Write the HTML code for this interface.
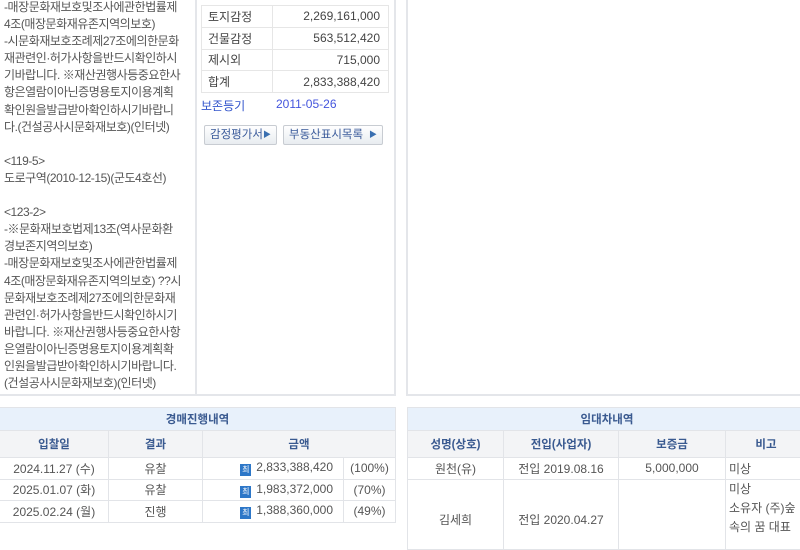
<!DOCTYPE html>
<html><head><meta charset="utf-8"><style>
*{margin:0;padding:0;box-sizing:border-box}
body{width:800px;height:522px;overflow:hidden;background:#fff;font-family:"Liberation Sans","Noto Sans CJK KR",sans-serif;font-size:12px;color:#555;position:relative}
.abs{position:absolute}
.txt{left:4px;top:-1px;width:191px;line-height:17.1px;letter-spacing:-0.45px;white-space:nowrap;height:394px;overflow:hidden}
table{border-collapse:collapse}
.inner{left:201px;top:5px;width:188px}
.inner td{border:1px solid #e6e6e6;height:21.8px;padding:0 6px;color:#444}
.inner td.r{text-align:right;padding-right:8px}
.btn{top:125px;height:20px;border:1px solid #c8ccd2;border-radius:2px;background:linear-gradient(#fff,#e8ecf0);color:#3a5a9a;font-size:11.5px;line-height:18px;padding-left:5px}
.btn span{position:absolute;right:5px;color:#3a6fb0;font-size:8px}
.bt{border-collapse:collapse;position:absolute;top:407px}
.bt td,.bt th{border:1px solid #e2e4e8;text-align:center;height:21.5px;color:#555;font-weight:normal}
.bt .t{background:#e8f1fb;color:#3a5a90;height:23px;font-weight:bold;font-size:11.5px}
.bt .h th{background:#f3f4f6;color:#3a5a90;height:27px;font-weight:bold;font-size:11.5px}
.ic{display:inline-block;width:11px;height:12px;background:#2d77c8;color:#fff;font-size:8px;line-height:12px;text-align:center;margin-right:5px;vertical-align:-1px}
.p{color:#4455dd}
</style></head><body>
<div class="abs txt">-매장문화재보호및조사에관한법률제<br>4조(매장문화재유존지역의보호)<br>-시문화재보호조례제27조에의한문화<br>재관련인·허가사항을반드시확인하시<br>기바랍니다. ※재산권행사등중요한사<br>항은열람이아닌증명용토지이용계획<br>확인원을발급받아확인하시기바랍니<br>다.(건설공사시문화재보호)(인터넷)<br><br>&lt;119-5&gt;<br>도로구역(2010-12-15)(군도4호선)<br><br>&lt;123-2&gt;<br>-※문화재보호법제13조(역사문화환<br>경보존지역의보호)<br>-매장문화재보호및조사에관한법률제<br>4조(매장문화재유존지역의보호) ??시<br>문화재보호조례제27조에의한문화재<br>관련인·허가사항을반드시확인하시기<br>바랍니다. ※재산권행사등중요한사항<br>은열람이아닌증명용토지이용계획확<br>인원을발급받아확인하시기바랍니다.<br>(건설공사시문화재보호)(인터넷)</div>
<div class="abs" style="left:195px;top:0;width:2px;height:395px;background:#e4e6ea"></div>
<div class="abs" style="left:394px;top:0;width:2px;height:396px;background:#e4e6ea"></div>
<div class="abs" style="left:0;top:394px;width:396px;height:2px;background:#e4e6ea"></div>
<div class="abs" style="left:406px;top:0;width:2px;height:396px;background:#e4e6ea"></div>
<div class="abs" style="left:406px;top:394px;width:394px;height:2px;background:#e4e6ea"></div>
<table class="abs inner">
<tr><td style="width:71px">토지감정</td><td class="r">2,269,161,000</td></tr>
<tr><td>건물감정</td><td class="r">563,512,420</td></tr>
<tr><td>제시외</td><td class="r">715,000</td></tr>
<tr><td>합계</td><td class="r">2,833,388,420</td></tr>
</table>
<div class="abs" style="left:201px;top:97px;color:#3355cc">보존등기</div>
<div class="abs" style="left:276px;top:97px;color:#4455dd">2011-05-26</div>
<div class="abs btn" style="left:204px;width:73px">감정평가서<span>▶</span></div>
<div class="abs btn" style="left:283px;width:100px">부동산표시목록<span>▶</span></div>
<table class="bt" style="left:-1px;width:397px">
<tr><td colspan="4" class="t">경매진행내역</td></tr>
<tr class="h"><th style="width:109px">입찰일</th><th style="width:94px">결과</th><th colspan="2">금액</th></tr>
<tr><td>2024.11.27 (수)</td><td>유찰</td><td style="text-align:right;padding-right:10px;width:141px"><span class="ic">최</span>2,833,388,420</td><td class="p">(100%)</td></tr>
<tr><td>2025.01.07 (화)</td><td>유찰</td><td style="text-align:right;padding-right:10px"><span class="ic">최</span>1,983,372,000</td><td class="p">(70%)</td></tr>
<tr><td>2025.02.24 (월)</td><td>진행</td><td style="text-align:right;padding-right:10px"><span class="ic">최</span>1,388,360,000</td><td class="p">(49%)</td></tr>
</table>
<table class="bt" style="left:407px;width:400px">
<tr><td colspan="4" class="t">임대차내역</td></tr>
<tr class="h"><th style="width:96px">성명(상호)</th><th style="width:115px">전입(사업자)</th><th style="width:107px">보증금</th><th>비고</th></tr>
<tr><td>원천(유)</td><td>전입 2019.08.16</td><td>5,000,000</td><td style="text-align:left;padding-left:3px">미상</td></tr>
<tr><td style="height:70px;padding-top:10px">김세희</td><td style="padding-top:10px">전입 2020.04.27</td><td></td><td style="text-align:left;padding-left:3px;vertical-align:top;line-height:19px">미상<br>소유자 (주)숲<br>속의 꿈 대표</td></tr>
</table>
</body></html>
